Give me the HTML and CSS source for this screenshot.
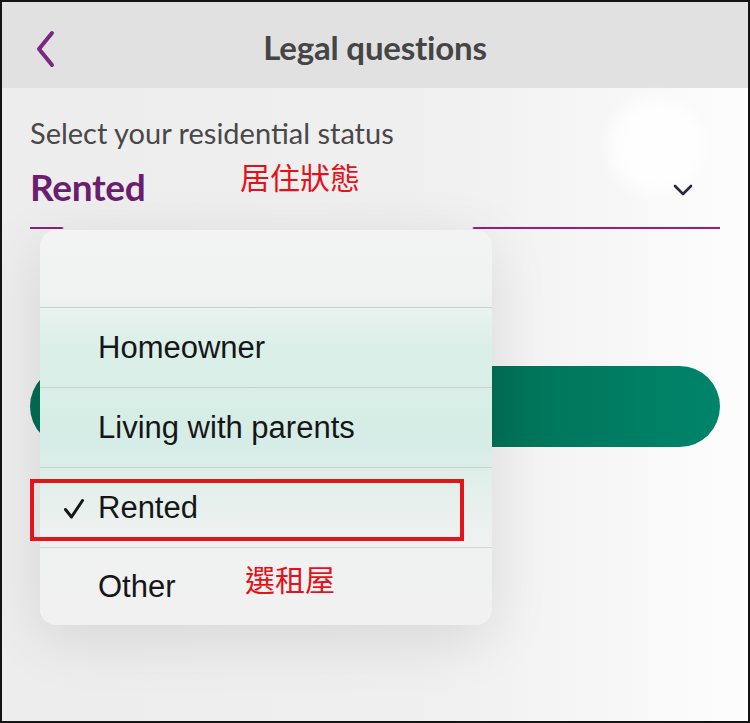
FILE: index.html
```html
<!DOCTYPE html>
<html lang="en">
<head>
<meta charset="utf-8">
<title>Legal questions</title>
<link rel="stylesheet" href="styles.css">
</head>
<body>
<div class="frame">
  <header class="topbar">
    <svg class="back" width="22" height="38" viewBox="0 0 22 38" aria-hidden="true">
      <path d="M18 3 L5 19 L18 35" fill="none" stroke="#7a2784" stroke-width="4" stroke-linecap="round" stroke-linejoin="round"/>
    </svg>
    <h1 class="title">Legal questions</h1>
  </header>

  <main class="content">
    <div class="glow"></div>
    <section class="field">
      <div class="field-label">Select your residential status</div>
      <div class="field-row">
        <span class="field-value">Rented</span>
        <svg class="caret" width="22" height="14" viewBox="0 0 22 14" aria-hidden="true">
          <path d="M3 3 L11 11 L19 3" fill="none" stroke="#2b2540" stroke-width="2.6" stroke-linecap="round" stroke-linejoin="round"/>
        </svg>
      </div>
      <div class="field-line"></div>
    </section>

    <div class="cta"></div>
  </main>

  <div class="picker">
    <div class="picker-head"></div>
    <div class="picker-item">Homeowner</div>
    <div class="picker-item">Living with parents</div>
    <div class="picker-item">
      <svg class="tick" width="22" height="22" viewBox="0 0 22 22" aria-hidden="true">
        <path d="M2.5 11.5 L8.5 19 L19.5 2.5" fill="none" stroke="#161616" stroke-width="3" stroke-linecap="round" stroke-linejoin="round"/>
      </svg>Rented</div>
    <div class="picker-item last">Other</div>
  </div>

  <div class="note note-status">居住狀態</div>
  <div class="note note-pick">選租屋</div>
  <div class="mark"></div>
</div>
</body>
</html>
```
FILE: styles.css
```css
* { box-sizing: border-box; }

html, body {
  margin: 0;
  padding: 0;
  background: #fff;
}

.frame {
  position: relative;
  width: 750px;
  height: 723px;
  border: 2px solid #141414;
  overflow: hidden;
  font-family: Lato, "Open Sans", sans-serif;
  background: linear-gradient(to right, #ededed 0%, #efefef 55%, #f6f6f6 80%, #fdfdfd 100%);
}

/* top navigation bar */
.topbar {
  position: relative;
  height: 86px;
  background: #e1e1e1;
  display: flex;
  align-items: center;
  justify-content: center;
}

.back {
  position: absolute;
  left: 32px;
  top: 28px;
}

.title {
  margin: 0 0 -4px;
  font-size: 33px;
  font-weight: 700;
  color: #454545;
  letter-spacing: -0.2px;
}

.content {
  position: relative;
  padding: 26px 28px 0;
}

.glow {
  position: absolute;
  right: 44px;
  top: 10px;
  width: 96px;
  height: 96px;
  border-radius: 50%;
  background: rgba(255, 255, 255, 0.8);
  filter: blur(8px);
}

.field {
  position: relative;
}

.field-label {
  font-size: 29px;
  color: #484848;
  line-height: 38px;
}

.field-row {
  display: flex;
  align-items: center;
  justify-content: space-between;
  height: 62px;
  padding-top: 6px;
  padding-right: 26px;
}

.field-value {
  font-size: 37px;
  font-weight: 700;
  color: #6b1d6e;
  letter-spacing: -0.3px;
}

.caret {
  margin-top: 8px;
}

.field-line {
  height: 2px;
  margin-top: 13px;
  background: linear-gradient(to right, #8e1f7e 0, #8e1f7e 32px, transparent 34px, transparent 442px, #9a1c84 444px, #9a1c84 100%);
}

.cta {
  margin-top: 137px;
  height: 81px;
  border-radius: 41px;
  background: linear-gradient(to right, #006c52 0%, #006c52 62%, #00775c 75%, #00846a 100%);
}

/* option sheet */
.picker {
  position: absolute;
  left: 38px;
  top: 228px;
  width: 452px;
  border-radius: 16px;
  overflow: hidden;
  background: linear-gradient(to bottom, #f3f3f3 0%, #f0f3f2 16%, #daefe8 30%, #d5ede6 55%, #e6f0ed 68%, #f0f1f1 80%, #f1f1f1 100%);
  box-shadow: 0 14px 60px rgba(0, 0, 0, 0.10);
}

.picker-head {
  height: 77px;
}

.picker-item {
  display: flex;
  align-items: center;
  height: 80px;
  padding-left: 58px;
  border-top: 1px solid #c6d2cd;
  font-family: "Liberation Sans", Arial, sans-serif;
  font-size: 31px;
  color: #161616;
  position: relative;
}

.picker-item.last {
  height: 78px;
  border-top-color: #d0d4d2;
}

.tick {
  position: absolute;
  left: 23px;
  top: 30px;
}

/* red annotations */
.note {
  position: absolute;
  font-family: "Noto Sans CJK TC", sans-serif;
  color: #e3121a;
  font-size: 30px;
  line-height: 1;
}

.note-status {
  left: 238px;
  top: 159px;
}

.note-pick {
  left: 243px;
  top: 561px;
}

.mark {
  position: absolute;
  left: 28px;
  top: 477px;
  width: 434px;
  height: 62px;
  border: 4px solid #e3151a;
}
```
